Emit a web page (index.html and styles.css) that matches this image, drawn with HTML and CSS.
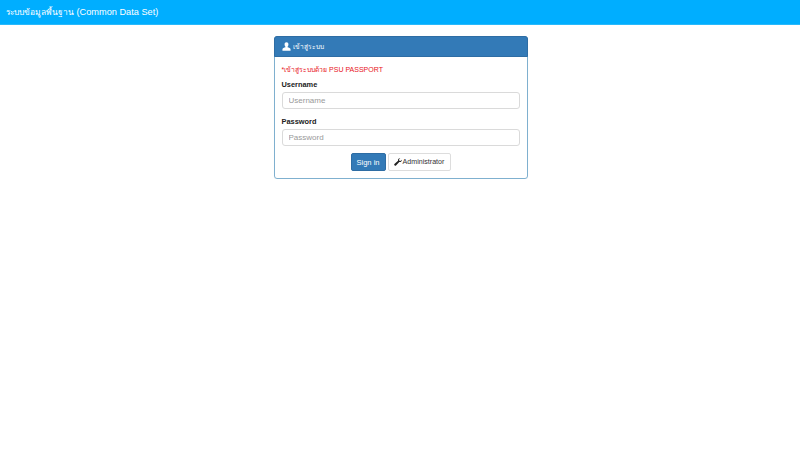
FILE: index.html
```html
<!DOCTYPE html>
<html lang="th">
<head>
  <meta charset="UTF-8" />
  <meta name="viewport" content="width=device-width, initial-scale=1.0" />
  <title>ระบบข้อมูลพื้นฐาน (Common Data Set)</title>
  <link rel="stylesheet" href="styles.css">
</head>
<body>

  <!-- Navbar -->
  <nav class="navbar"><span class="thai-title">ระบบข้อมูลพื้นฐาน</span> (Common Data Set)</nav>

  <!-- Login -->
  <div class="panel">
    <div class="panel-heading">
      <svg class="icon" viewBox="0 0 12 12" width="9" height="9" aria-hidden="true">
        <path d="M6 0.3C4.4 0.3 3.4 1.5 3.4 3.2c0 1.2.5 2.3 1.2 3v.9C3 7.7.6 8.200.6 9.800v1.700h10.800V9.800c0-1.600-2.400-2.100-4-2.700v-.9c.7-.7 1.200-1.800 1.200-3C8.600 1.500 7.600.3 6 .3z" fill="#fff"/>
      </svg>
      <span>เข้าสู่ระบบ</span>
    </div>
    <form class="panel-body">
      <p class="note"><span class="thai-note">*เข้าสู่ระบบด้วย</span> PSU PASSPORT</p>
      <label class="field-label" for="username">Username</label>
      <input class="field" id="username" type="text" placeholder="Username">
      <label class="field-label" for="password">Password</label>
      <input class="field" id="password" type="password" placeholder="Password">
      <div class="actions">
        <button class="btn btn-primary" type="button">Sign in</button>
        <button class="btn btn-default" type="button">
          <svg class="icon" viewBox="0 0 12 12" width="8" height="8" aria-hidden="true">
            <path d="M11.600 2.600c.2.900-.1 1.900-.8 2.600-.8.800-1.900 1-2.900.7L3 11.400c-.5.500-1.300.5-1.800 0l-.6-.6c-.5-.5-.5-1.300 0-1.800l5.500-4.900c-.3-1-.1-2.100.7-2.900C7.500.5 8.500.2 9.400.4L7.500 2.300l.4 1.800 1.800.4 1.900-1.900z" fill="#222"/>
          </svg>
          <span>Administrator</span>
        </button>
      </div>
    </form>
  </div>

</body>
</html>
```

FILE: styles.css
```css
body {
  margin: 0;
  background-color: #fff;
  font-family: "Liberation Sans", "Noto Sans", sans-serif;
  color: #333;
}

.navbar {
  height: 24px;
  line-height: 24px;
  padding-left: 6px;
  background-color: #00aeff;
  border-bottom: 1px solid #29b9fb;
  color: #fff;
  font-size: 9.2px;
}

.thai-title {
  font-size: 8.4px;
}

.panel {
  width: 252px;
  margin: 11px auto 0;
  position: relative;
  left: 0.5px;
  border: 1px solid #7fb0cf;
  border-radius: 3px;
  box-shadow: 0 1px 1px rgba(0,0,0,0.05);
}

.panel-heading {
  display: flex;
  align-items: center;
  gap: 2px;
  height: 19px;
  margin: -1px -1px 0;
  padding-left: 7px;
  background-color: #337ab7;
  border: 1px solid #2e6da4;
  border-radius: 3px 3px 0 0;
  color: #fff;
  font-size: 6.6px;
}

.panel-body {
  padding: 7px;
}

.note {
  margin: 0 0 3px;
  line-height: 12px;
  color: #e8141c;
  font-size: 7px;
}

.thai-note {
  font-size: 6.8px;
}

.field-label {
  display: block;
  margin-bottom: 2px;
  line-height: 11px;
  color: #222;
  font-size: 7.4px;
  font-weight: bold;
}

.field {
  display: block;
  box-sizing: border-box;
  width: 100%;
  height: 17px;
  margin-bottom: 7px;
  padding: 0 6px;
  background: #fff;
  border: 1px solid #dadada;
  border-radius: 3px;
  font-family: inherit;
  font-size: 8px;
  color: #555;
}

.field::placeholder {
  color: #999;
  opacity: 1;
}

.actions {
  display: flex;
  justify-content: center;
  gap: 2px;
}

.btn {
  display: flex;
  align-items: center;
  justify-content: center;
  gap: 1px;
  height: 18px;
  padding: 0;
  border: 1px solid transparent;
  border-radius: 2px;
  font-family: inherit;
  white-space: nowrap;
}

.btn-primary {
  width: 35px;
  background-color: #337ab7;
  border-color: #2e6da4;
  color: #fff;
  font-size: 7.5px;
}

.btn-default {
  width: 63px;
  background-color: #fff;
  border-color: #ddd;
  color: #333;
  font-size: 7.1px;
}
```
